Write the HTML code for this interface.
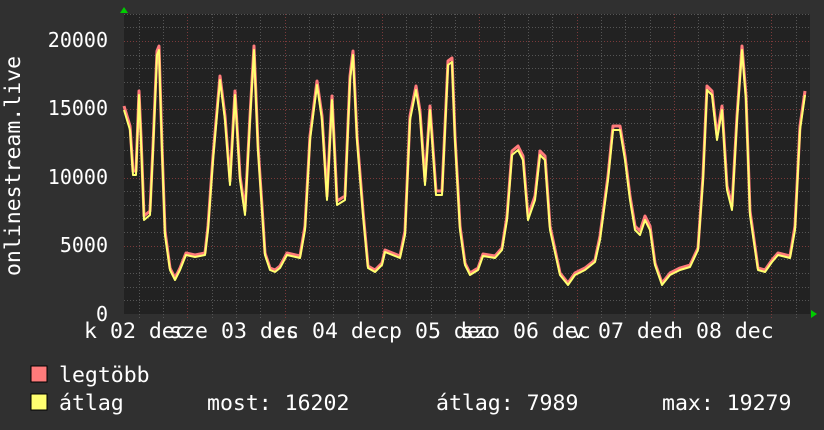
<!DOCTYPE html>
<html><head><meta charset="utf-8"><style>
html,body{margin:0;padding:0;background:#303030;}
svg{display:block;}
text{font-family:"DejaVu Sans Mono","Liberation Mono",monospace;fill:#fff;font-size:20px;}
.lg{font-size:21.5px;}
</style></head><body>
<svg width="824" height="430" viewBox="0 0 824 430" xmlns="http://www.w3.org/2000/svg">
<rect width="824" height="430" fill="#303030"/>
<rect x="124" y="14" width="686" height="300" fill="#222"/>
<g id="grid"></g>
<polyline id="red" fill="none" stroke="#ff7b7b" stroke-width="3" stroke-linejoin="round"/>
<polyline id="yel" fill="none" stroke="#ffff70" stroke-width="2" stroke-linejoin="round"/>
<polygon points="120,13 124,7 128,13" fill="#0c0"/>
<polygon points="811,310 817,314 811,318" fill="#0c0"/>
<g text-anchor="end">
<text x="108" y="47">20000</text>
<text x="108" y="115">15000</text>
<text x="108" y="184">10000</text>
<text x="108" y="252">5000</text>
<text x="108" y="321">0</text>
</g>
<text transform="translate(20,166) rotate(-90)" text-anchor="middle" class="lg">onlinestream.live</text>
<g id="xl"></g>
<rect x="31" y="366" width="16" height="16" fill="#ff7b7b" stroke="#000"/>
<rect x="31" y="394" width="16" height="16" fill="#ffff70" stroke="#000"/>
<text x="59" y="382" class="lg">legtöbb</text>
<text x="59" y="410" class="lg">átlag</text>
<text x="207" y="410" class="lg">most: 16202</text>
<text x="436" y="410" class="lg">átlag: 7989</text>
<text x="662" y="410" class="lg">max: 19279</text>
</svg>
<script>
var ns="http://www.w3.org/2000/svg",g=document.getElementById('grid');
function ln(x1,y1,x2,y2,c){var l=document.createElementNS(ns,'line');l.setAttribute('x1',x1);l.setAttribute('y1',y1);l.setAttribute('x2',x2);l.setAttribute('y2',y2);l.setAttribute('stroke',c);l.setAttribute('stroke-width',1);l.setAttribute('stroke-dasharray','1,2');g.appendChild(l);}
for(var i=1;i<=22;i++){var y=Math.round(314-i*13.65)+0.5;ln(124,y,810,y,i%5==0?'#7a3a3a':'#555');}
for(var x=187.5-97.3*2;x<810;x+=24.325){if(x<125)continue;var k=Math.round((x-187.5)/24.325);var xx=Math.round(x)+0.5;ln(xx,14,xx,318,k%4==0?'#7a3a3a':'#555');}
var pts=[124,110,130,130,133,175,136,175,139,95,141,140,144,220,150,215,153,150,157,55,159,50,162,150,165,235,170,270,175,280,180,270,186,255,195,257,205,255,208,230,213,160,220,80,225,120,230,185,235,95,240,180,245,215,250,120,254,50,258,150,262,210,265,255,270,270,275,272,280,268,287,255,300,258,305,230,310,140,317,85,322,120,327,200,332,100,337,205,345,200,350,80,353,55,357,140,363,215,368,268,375,272,382,265,385,252,400,258,405,235,410,120,416,90,420,115,425,185,430,110,436,195,442,195,448,65,452,62,455,140,460,230,465,265,470,275,478,270,483,256,495,258,502,250,507,220,512,155,518,150,523,160,528,220,535,200,540,155,545,160,550,230,560,275,568,285,575,275,585,270,595,262,600,240,608,180,613,130,620,130,625,160,630,200,635,230,640,235,645,220,650,230,655,265,662,285,670,275,680,270,690,267,698,250,703,180,707,90,712,95,717,140,722,110,727,190,732,210,737,120,742,50,746,100,750,215,758,270,765,272,772,262,778,255,790,258,795,230,800,130,805,95];
var y1=[],r1=[];for(var i=0;i<pts.length;i+=2){y1.push(pts[i]+','+pts[i+1]);r1.push(pts[i]+','+(pts[i+1]-(pts[i+1]<250?4:2)));}
document.getElementById('yel').setAttribute('points',y1.join(' '));
document.getElementById('red').setAttribute('points',r1.join(' '));
var xl=document.getElementById('xl');
var labs=[['k','02',110],['sze','03',221],['cs','04',312],['p','05',415],['szo','06',513],['v','07',598],['h','08',696]];
labs.forEach(function(a){var t=document.createElementNS(ns,'text');t.setAttribute('x',a[2]);t.setAttribute('y',338);t.setAttribute('class','lg');t.textContent=a[1]+' dec';xl.appendChild(t);
var w=document.createElementNS(ns,'text');w.setAttribute('x',a[2]-13);w.setAttribute('y',338);w.setAttribute('class','lg');w.setAttribute('text-anchor','end');w.textContent=a[0];xl.appendChild(w);});
</script>
</body></html>
